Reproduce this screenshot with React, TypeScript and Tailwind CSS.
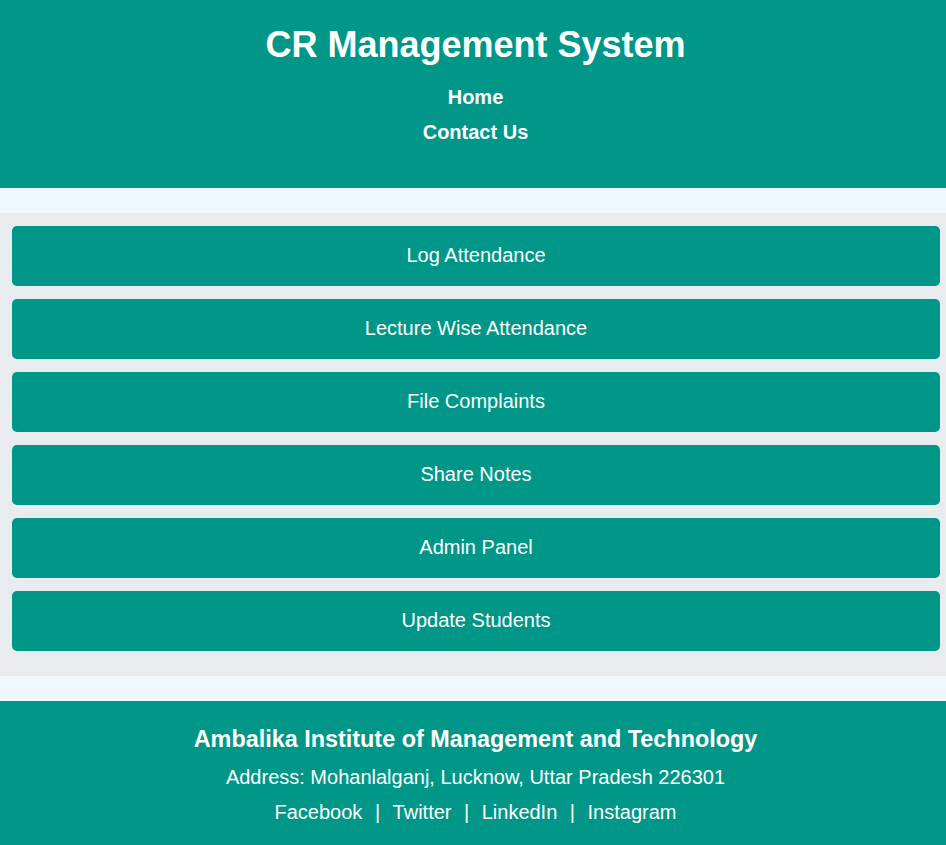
const actions = [
  'Log Attendance',
  'Lecture Wise Attendance',
  'File Complaints',
  'Share Notes',
  'Admin Panel',
  'Update Students',
];

const socials = ['Facebook', 'Twitter', 'LinkedIn', 'Instagram'];

export default function App() {
  return (
    <div className="min-h-screen bg-[#f0f8ff] font-['Liberation_Sans',Arial,sans-serif] text-white">
      {/* Header */}
      <header className="bg-[#009688] h-[188px] pt-[25px] pl-[5px] text-center">
        <h1 className="text-[36px] leading-[40px] font-bold">CR Management System</h1>
        <nav className="mt-[20px] flex flex-col items-center gap-[11px]">
          <a className="text-[20px] leading-[24px] font-bold">Home</a>
          <a className="text-[20px] leading-[24px] font-bold">Contact Us</a>
        </nav>
      </header>

      {/* Actions */}
      <main className="mt-[25px] bg-[#e8ecef] pt-[13px] pb-[25px] pl-[12px]">
        <div className="flex flex-col gap-[13px] w-[928px]">
          {actions.map((label) => (
            <button
              key={label}
              className="h-[60px] w-full rounded-[5px] bg-[#009688] pb-[2px] text-[20px] text-white"
            >
              {label}
            </button>
          ))}
        </div>
      </main>

      {/* Footer */}
      <footer className="mt-[25px] bg-[#009688] h-[144px] pt-[24px] pl-[5px] text-center">
        <p className="text-[23.4px] leading-[28px] font-bold">
          Ambalika Institute of Management and Technology
        </p>
        <p className="mt-[12px] text-[20px] leading-[24px]">
          Address: Mohanlalganj, Lucknow, Uttar Pradesh 226301
        </p>
        <p className="mt-[11px] text-[20px] leading-[24px]">
          {socials.map((s, i) => (
            <span key={s}>
              {i > 0 && <span className="mx-[12.5px]">|</span>}
              <a>{s}</a>
            </span>
          ))}
        </p>
      </footer>
    </div>
  );
}
